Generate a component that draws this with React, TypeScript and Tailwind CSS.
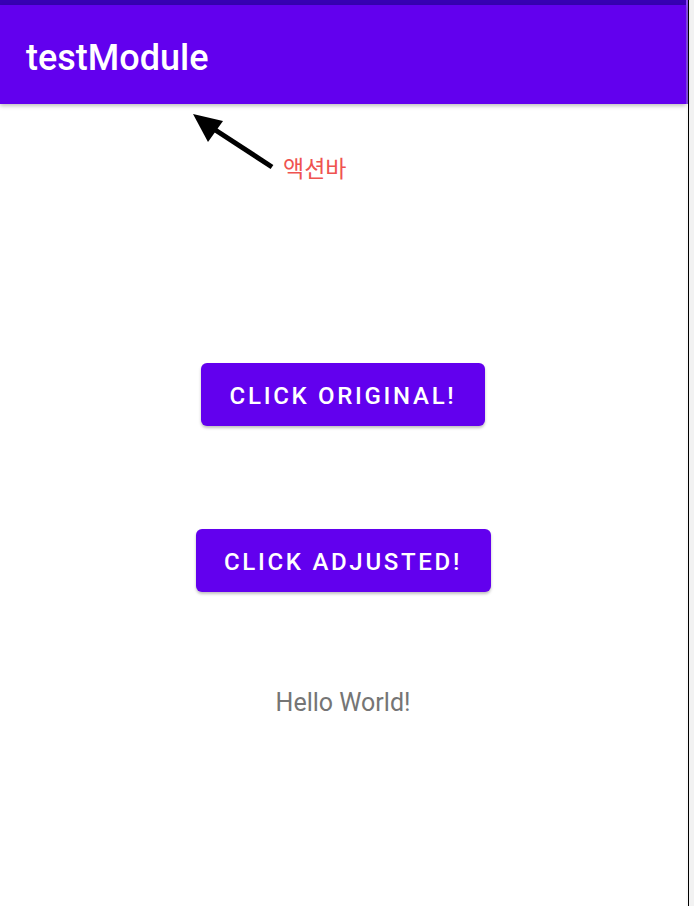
import React from "react";

export default function App() {
  return (
    <div className="flex h-[906px] w-[694px] overflow-hidden bg-[#f2f2f2]" style={{ fontFamily: "Roboto, 'Noto Sans CJK KR', sans-serif" }}>
      <div className="relative flex h-full w-[686px] flex-col bg-white">
        <div className="h-[5px] w-full bg-[#3700B3]" />
        <div className="relative z-10 flex h-[99px] items-center bg-[#6200EE] pl-[26px] pt-[6px] shadow-[0_2px_4px_rgba(0,0,0,0.25)]">
          <span className="text-[36px] font-medium leading-none text-white">testModule</span>
        </div>
        <div className="flex flex-1 flex-col items-center">
          <button className="mt-[259px] flex h-[63px] w-[284px] items-center justify-center rounded-[6px] bg-[#6200EE] pt-[3px] text-[24px] font-medium tracking-[2.7px] text-white shadow-[0_2px_3px_rgba(0,0,0,0.25)]">
            CLICK ORIGINAL!
          </button>
          <button className="mt-[103px] flex h-[63px] w-[295px] items-center justify-center rounded-[6px] bg-[#6200EE] pt-[3px] text-[24px] font-medium tracking-[2.7px] text-white shadow-[0_2px_3px_rgba(0,0,0,0.25)]">
            CLICK ADJUSTED!
          </button>
          <div className="mt-[98px] text-[25px] leading-none text-[#757575]">Hello World!</div>
        </div>
        <svg className="absolute left-[186px] top-[108px]" width="100" height="70" viewBox="0 0 100 70">
          <line x1="86" y1="59" x2="17" y2="14" stroke="black" strokeWidth="5" />
          <polygon points="7,6 37,13 22,34" fill="black" />
        </svg>
        <div className="absolute left-[283px] top-[158px] text-[23px] leading-none text-[#ef5350]">액션바</div>
      </div>
      <div className="flex h-full w-[2px] flex-col bg-[#fafafa]">
        <div className="h-[104px] bg-[#8a4cf0]" />
      </div>
      <div className="h-full w-[1px] bg-black" />
    </div>
  );
}
